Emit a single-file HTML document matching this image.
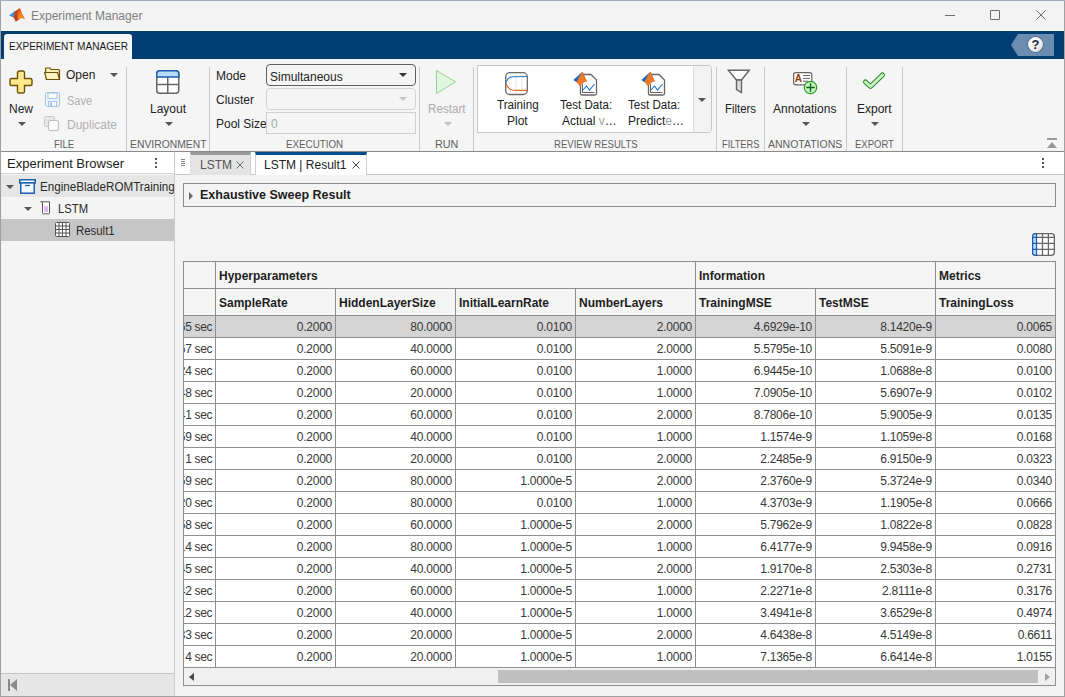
<!DOCTYPE html>
<html><head><meta charset="utf-8">
<style>
*{box-sizing:border-box;margin:0;padding:0}
html,body{width:1065px;height:697px;overflow:hidden;background:#f3f3f3;font-family:"Liberation Sans",sans-serif;color:#1a1a1a;position:relative}
.a{position:absolute}
.t{position:absolute;white-space:nowrap;line-height:1}
.sep{position:absolute;width:1px;background:#c9c9c9;top:67px;height:84px}
.lbl{position:absolute;top:140px;font-size:10px;color:#606060;white-space:nowrap;line-height:1}
.bt{position:absolute;font-size:12px;white-space:nowrap;line-height:1;color:#222}
.arr{position:absolute;width:0;height:0;border-left:4px solid transparent;border-right:4px solid transparent;border-top:4px solid #555}
.th{position:absolute;font-size:12px;font-weight:bold;white-space:nowrap;line-height:1;color:#1e1e1e}
.td{position:absolute;font-size:12px;white-space:nowrap;line-height:1;color:#383838;letter-spacing:-0.25px}
svg{position:absolute;overflow:visible}
</style></head><body>
<!-- title bar -->
<div class="a" style="left:0;top:0;width:1065px;height:31px;background:#f3f3f3"></div>
<svg style="left:9px;top:7px" width="17" height="16" viewBox="0 0 17 16">
<polygon points="0,8.4 6,3.8 7.5,6.5 5.3,10.7" fill="#3f94d8"/>
<polygon points="4.5,10 6,4.5 10.7,0.9 13,6.5 15.8,12.2 12.8,10.5 6.8,14.8" fill="#c33d1c"/>
<polygon points="10.7,0.9 13,6.5 15.8,12.2 12.8,10.5 9,13 8.5,7" fill="#f08a28"/>
<polygon points="10.7,0.9 12,4 10,9 8,6" fill="#e06020"/>
</svg>
<div class="t" style="left:31px;top:10px;font-size:12px;color:#7e7e7e">Experiment Manager</div>
<div class="a" style="left:945px;top:15px;width:10px;height:1px;background:#6e6e6e"></div>
<div class="a" style="left:990px;top:10px;width:10px;height:10px;border:1px solid #6e6e6e;border-radius:1px"></div>
<svg style="left:1036px;top:10px" width="10" height="10" viewBox="0 0 10 10"><path d="M0.5 0.5L9.5 9.5M9.5 0.5L0.5 9.5" stroke="#6e6e6e" stroke-width="1"/></svg>
<!-- blue bar -->
<div class="a" style="left:0;top:30px;width:1065px;height:1px;background:#fafafa"></div>
<div class="a" style="left:1px;top:31px;width:1064px;height:28px;background:#003e73"></div>
<div class="a" style="left:4px;top:34px;width:128px;height:25px;background:#f5f5f5;border-radius:3px 3px 0 0"></div>
<div class="t" style="left:9px;top:41px;font-size:11px;color:#1a1a1a;transform:scaleX(0.915);transform-origin:0 0">EXPERIMENT MANAGER</div>
<svg style="left:1011px;top:34px" width="43" height="22" viewBox="0 0 43 22"><polygon points="0,11 7,0 43,0 43,22 7,22" fill="#6a8db0"/></svg>
<div class="a" style="left:1028px;top:37px;width:15px;height:15px;border-radius:50%;background:radial-gradient(circle at 40% 35%,#ffffff 0,#f4f4f4 45%,#c8c8d0 100%);box-shadow:0 0 0 0.5px #30506a"></div>
<div class="t" style="left:1031.5px;top:38px;font-size:13px;font-weight:bold;color:#1a2540">?</div>
<!-- toolstrip -->
<div class="a" style="left:1px;top:59px;width:1063px;height:92px;background:#f5f5f5"></div>
<div class="a" style="left:0;top:151px;width:1065px;height:1px;background:#8a8a8a"></div>
<div class="sep" style="left:126px"></div>
<div class="sep" style="left:209px"></div>
<div class="sep" style="left:419px"></div>
<div class="sep" style="left:473px"></div>
<div class="sep" style="left:716px"></div>
<div class="sep" style="left:764px"></div>
<div class="sep" style="left:846px"></div>
<div class="sep" style="left:902px"></div>
<div class="lbl" style="left:54px;transform:scaleX(0.95);transform-origin:0 0">FILE</div>
<div class="lbl" style="left:130px;transform:scaleX(1.035);transform-origin:0 0">ENVIRONMENT</div>
<div class="lbl" style="left:286px;transform:scaleX(0.98);transform-origin:0 0">EXECUTION</div>
<div class="lbl" style="left:435px;transform:scaleX(1.08);transform-origin:0 0">RUN</div>
<div class="lbl" style="left:554px;transform:scaleX(0.955);transform-origin:0 0">REVIEW RESULTS</div>
<div class="lbl" style="left:722px;transform:scaleX(0.925);transform-origin:0 0">FILTERS</div>
<div class="lbl" style="left:768px;transform:scaleX(1.05);transform-origin:0 0">ANNOTATIONS</div>
<div class="lbl" style="left:855px;transform:scaleX(0.95);transform-origin:0 0">EXPORT</div>
<!-- collapse icon -->
<div class="a" style="left:1047px;top:138px;width:10px;height:2px;background:#9a9a9a"></div>
<div class="a" style="left:1047px;top:142px;width:0;height:0;border-left:5px solid transparent;border-right:5px solid transparent;border-bottom:6px solid #9a9a9a"></div>
<!-- FILE -->
<svg style="left:9px;top:70px" width="24" height="24" viewBox="0 0 24 24"><path d="M9.5 1.5 Q8.5 1.5 8.5 2.5 V8.5 H2.5 Q1 8.5 1 10 V14 Q1 15.5 2.5 15.5 H8.5 V21.5 Q8.5 23 10 23 H14 Q15.5 23 15.5 21.5 V15.5 H21.5 Q23 15.5 23 14 V10 Q23 8.5 21.5 8.5 H15.5 V2.5 Q15.5 1 14 1 H10 Z" fill="#ffe98c" stroke="#6b5206" stroke-width="1.4"/></svg>
<div class="bt" style="left:9px;top:103px">New</div>
<div class="arr" style="left:18px;top:122px"></div>
<svg style="left:44px;top:67px" width="17" height="14" viewBox="0 0 17 14"><path d="M1.5 2 Q1.5 1 2.5 1 H6 L7 2.5 H14.5 Q15.5 2.5 15.5 3.5 V12.5 H2.5 Z" fill="#fff0b0" stroke="#6b5206" stroke-width="1.2"/><path d="M0.7 5.5 H13.5 L15.5 12.5 H2.5 Z" fill="#fff3c4" stroke="#6b5206" stroke-width="1.2"/></svg>
<div class="bt" style="left:66px;top:69px">Open</div>
<div class="arr" style="left:110px;top:73px"></div>
<svg style="left:45px;top:92px" width="15" height="15" viewBox="0 0 15 15"><path d="M1.5 0.5 H13.5 Q14.5 0.5 14.5 1.5 V13.5 Q14.5 14.5 13.5 14.5 H2 L0.5 13 V1.5 Q0.5 0.5 1.5 0.5 Z" fill="#eef4fb" stroke="#a9c3e3" stroke-width="1"/><rect x="3" y="1" width="9" height="5.5" fill="#fafafa" stroke="#a9c3e3" stroke-width="1"/><rect x="3.5" y="9.5" width="8" height="5" fill="#fafafa" stroke="#a9c3e3" stroke-width="1"/><rect x="5" y="10.5" width="2" height="3.5" fill="#a9c3e3"/></svg>
<div class="bt" style="left:67px;top:95px;color:#b0b0b0;transform:scaleX(0.92);transform-origin:0 0">Save</div>
<svg style="left:44px;top:116px" width="16" height="15" viewBox="0 0 16 15"><rect x="0.5" y="0.5" width="10" height="10" rx="1.5" fill="#e8e8e8" stroke="#cccccc"/><rect x="4.5" y="4.5" width="10" height="10" rx="1.5" fill="#fbfbfb" stroke="#bdbdbd"/></svg>
<div class="bt" style="left:67px;top:119px;color:#b0b0b0">Duplicate</div>
<!-- ENVIRONMENT -->
<svg style="left:156px;top:70px" width="24" height="24" viewBox="0 0 24 24"><rect x="0.75" y="0.75" width="22" height="22.5" rx="3" fill="#fff" stroke="#666" stroke-width="1.5"/><path d="M0.75 7 V3.75 Q0.75 0.75 3.75 0.75 H19.75 Q22.75 0.75 22.75 3.75 V7 Z" fill="#b8dcfc" stroke="#1c5cae" stroke-width="1.5"/><path d="M11.75 7 V23 M0.75 14.5 H22.75" stroke="#666" stroke-width="1.5"/></svg>
<div class="bt" style="left:150px;top:103px">Layout</div>
<div class="arr" style="left:165px;top:122px"></div>
<!-- EXECUTION -->
<div class="bt" style="left:216px;top:70px">Mode</div>
<div class="bt" style="left:216px;top:94px">Cluster</div>
<div class="bt" style="left:216px;top:118px">Pool Size</div>
<div class="a" style="left:266px;top:64px;width:150px;height:22px;border:1px solid #5f5f5f;border-radius:4px;background:#f5f5f5"></div>
<div class="bt" style="left:270px;top:71px">Simultaneous</div>
<div class="arr" style="left:399px;top:73px;border-top-color:#333"></div>
<div class="a" style="left:266px;top:88px;width:150px;height:22px;border:1px solid #d2d2d2;border-radius:4px;background:#f5f5f5"></div>
<div class="arr" style="left:399px;top:97px;border-top-color:#c4c4c4"></div>
<div class="a" style="left:266px;top:112px;width:150px;height:22px;border:1px solid #cfcfcf;background:#f5f5f5"></div>
<div class="bt" style="left:271px;top:118px;color:#a8a8a8">0</div>
<!-- RUN -->
<svg style="left:436px;top:70px" width="20" height="24" viewBox="0 0 20 24"><polygon points="0.5,0.5 19.5,11.8 0.5,23.5" fill="#e3f6e1" stroke="#96d396" stroke-width="1"/></svg>
<div class="bt" style="left:428px;top:103px;color:#ababab;transform:scaleX(0.97);transform-origin:0 0">Restart</div>
<div class="arr" style="left:444px;top:122px;border-top-color:#c0c0c0"></div>
<!-- REVIEW RESULTS gallery -->
<div class="a" style="left:477px;top:65px;width:235px;height:68px;border:1px solid #c6c6c6;border-radius:0 4px 4px 0;background:#fff"></div>
<div class="a" style="left:693px;top:66px;width:18px;height:66px;background:#f3f3f3;border-left:1px solid #e0e0e0;border-radius:0 3px 3px 0"></div>
<div class="arr" style="left:698px;top:98px"></div>
<svg style="left:505px;top:72px" width="23" height="23" viewBox="0 0 23 23"><rect x="0.7" y="0.7" width="21.6" height="21.8" rx="4" fill="#fff"/><path d="M5.5 2 V21 M11 2 V21 M17 2 V21" stroke="#f0f0f0" stroke-width="1.5"/><path d="M0.8 10.5 C2.5 7 4 5 7 4.8 S14 4.5 22 4.5" fill="none" stroke="#2479cf" stroke-width="1.1"/><path d="M0.8 11.5 C2.5 15.5 4 17.5 7 18 S14 18.4 22 18.4" fill="none" stroke="#e2662a" stroke-width="1.1"/><rect x="0.7" y="0.7" width="21.6" height="21.8" rx="4" fill="none" stroke="#6a6a6a" stroke-width="1.3"/></svg>
<div class="bt" style="left:497px;top:99px;transform:scaleX(0.97);transform-origin:0 0">Training</div>
<div class="bt" style="left:507px;top:115px">Plot</div>
<svg style="left:573px;top:71px" width="25" height="25" viewBox="0 0 25 25"><path d="M7.5 3.5 H18 L23.5 9 V22.5 Q23.5 24 22 24 H9 Q7.5 24 7.5 22.5 Z" fill="#fff" stroke="#666" stroke-width="1.3"/><path d="M9.5 13 V21.5 H21.5" fill="none" stroke="#666" stroke-width="1"/><path d="M10 19 L13.5 15 L16.5 19 L21.5 13" fill="none" stroke="#1a73c9" stroke-width="1.1"/><polygon points="0.3,9 7.8,2.2 9.2,3.2 4,11.5" fill="#1f66c1"/><polygon points="3.5,10.8 8,2.6 9.3,1 13.8,10.8 12.2,10.4 6.4,15" fill="#f0782a"/><path d="M8 2.6 L9.3 1 L13.8 10.8" fill="none" stroke="#b0501a" stroke-width="0.6"/></svg>
<div class="bt" style="left:560px;top:99px;transform:scaleX(0.965);transform-origin:0 0">Test Data:</div>
<div class="bt" style="left:562px;top:115px">Actual <span style="color:#a0a0a0">v</span>…</div>
<svg style="left:641px;top:71px" width="25" height="25" viewBox="0 0 25 25"><path d="M7.5 3.5 H18 L23.5 9 V22.5 Q23.5 24 22 24 H9 Q7.5 24 7.5 22.5 Z" fill="#fff" stroke="#666" stroke-width="1.3"/><path d="M9.5 13 V21.5 H21.5" fill="none" stroke="#666" stroke-width="1"/><path d="M10 19 L13.5 15 L16.5 19 L21.5 13" fill="none" stroke="#1a73c9" stroke-width="1.1"/><polygon points="0.3,9 7.8,2.2 9.2,3.2 4,11.5" fill="#1f66c1"/><polygon points="3.5,10.8 8,2.6 9.3,1 13.8,10.8 12.2,10.4 6.4,15" fill="#f0782a"/><path d="M8 2.6 L9.3 1 L13.8 10.8" fill="none" stroke="#b0501a" stroke-width="0.6"/></svg>
<div class="bt" style="left:628px;top:99px;transform:scaleX(0.965);transform-origin:0 0">Test Data:</div>
<div class="bt" style="left:628px;top:115px">Predict<span style="color:#a0a0a0">e</span>…</div>
<!-- FILTERS -->
<svg style="left:727px;top:69px" width="24" height="25" viewBox="0 0 24 25"><path d="M1.3 1.3 H22.3 L14.5 11 H9.5 Z" fill="#fff" stroke="#666" stroke-width="1.4"/><path d="M9.5 11 H14.5 V23.5 L9.5 20.5 Z" fill="#dcdcdc" stroke="#666" stroke-width="1.4"/></svg>
<div class="bt" style="left:725px;top:103px;transform:scaleX(0.95);transform-origin:0 0">Filters</div>
<!-- ANNOTATIONS -->
<svg style="left:793px;top:72px" width="25" height="23" viewBox="0 0 25 23"><rect x="0.6" y="0.6" width="18.2" height="12.2" rx="2.2" fill="#fff" stroke="#666" stroke-width="1.2"/><text x="1.8" y="10" font-family="Liberation Sans" font-weight="bold" font-size="10" fill="#8f3c05">A</text><path d="M10 3.5 H17 M10 6.4 H17 M10 9.2 H15" stroke="#666" stroke-width="1"/><circle cx="17.5" cy="15.5" r="6.2" fill="#c6f5c2" stroke="#2a9a2a" stroke-width="1.2"/><path d="M17.5 11.3 V19.7 M13.3 15.5 H21.7" stroke="#106010" stroke-width="1.4"/></svg>
<div class="bt" style="left:773px;top:103px">Annotations</div>
<div class="arr" style="left:802px;top:122px"></div>
<!-- EXPORT -->
<svg style="left:862px;top:72px" width="24" height="19" viewBox="0 0 24 19"><path d="M3.5 10 L8.5 14.5 L20.5 3" fill="none" stroke="#2a8a2a" stroke-width="5" stroke-linecap="round" stroke-linejoin="round"/><path d="M3.5 10 L8.5 14.5 L20.5 3" fill="none" stroke="#c8f7c4" stroke-width="3" stroke-linecap="round" stroke-linejoin="round"/></svg>
<div class="bt" style="left:857px;top:103px">Export</div>
<div class="arr" style="left:871px;top:122px"></div>
<!-- left panel -->
<div class="a" style="left:1px;top:152px;width:173px;height:544px;background:#f4f4f4"></div>
<div class="a" style="left:1px;top:152px;width:173px;height:22px;background:#fff;border-bottom:1px solid #d0d0d0"></div>
<div class="t" style="left:7px;top:157px;font-size:13px;color:#1a1a1a">Experiment Browser</div>
<div class="a" style="left:155px;top:158px;width:2px;height:2px;background:#5a5a5a"></div>
<div class="a" style="left:155px;top:162px;width:2px;height:2px;background:#5a5a5a"></div>
<div class="a" style="left:155px;top:166px;width:2px;height:2px;background:#5a5a5a"></div>
<div class="a" style="left:1px;top:175px;width:173px;height:22px;background:#e6e6e6"></div>
<div class="arr" style="left:6px;top:185px;border-top-color:#555"></div>
<svg style="left:19px;top:179px" width="17" height="15" viewBox="0 0 17 15"><rect x="0.75" y="0.75" width="15.5" height="3.2" fill="#fff" stroke="#1c5fae" stroke-width="1.5"/><rect x="1.75" y="3.9" width="13.5" height="10.3" fill="#f3f8ff" stroke="#1c5fae" stroke-width="1.5"/><path d="M6 6.5 H11" stroke="#1c5fae" stroke-width="1.2"/></svg>
<div class="a" style="left:40px;top:175px;width:134px;height:22px;overflow:hidden"><div class="t" style="left:0;top:6px;font-size:12px;color:#2a2a2a;transform:scaleX(0.97);transform-origin:0 0">EngineBladeROMTraining</div></div>
<div class="arr" style="left:24px;top:207px;border-top-color:#555"></div>
<svg style="left:40px;top:201px" width="11" height="14" viewBox="0 0 11 14"><path d="M0.5 0.8 H9.5 M1.5 0.8 Q2.5 1 2.5 2 V11.8 Q2.5 12.8 3.5 12.8 H8.5 Q9.5 12.8 9.5 11.8 V0.8" fill="#fff" stroke="#555" stroke-width="1"/><rect x="4.3" y="5.2" width="3.6" height="5.8" fill="#dcb4f2"/></svg>
<div class="t" style="left:58px;top:203px;font-size:12px;color:#2a2a2a;transform:scaleX(0.94);transform-origin:0 0">LSTM</div>
<div class="a" style="left:1px;top:219px;width:173px;height:22px;background:#c6c6c6"></div>
<svg style="left:55px;top:222px" width="15" height="15" viewBox="0 0 15 15"><rect x="0.5" y="0.5" width="14" height="14" rx="1" fill="#fff" stroke="#555" stroke-width="1"/><path d="M4 0.5 V14.5 M7.5 0.5 V14.5 M11 0.5 V14.5 M0.5 4 H14.5 M0.5 7.5 H14.5 M0.5 11 H14.5" stroke="#555" stroke-width="1"/></svg>
<div class="t" style="left:76px;top:225px;font-size:12px;color:#2a2a2a;transform:scaleX(0.95);transform-origin:0 0">Result1</div>
<div class="a" style="left:1px;top:673px;width:173px;height:23px;background:#e6e6e6;border-top:1px solid #c4c4c4"></div>
<div class="a" style="left:8px;top:679px;width:2px;height:12px;background:#8a8a8a"></div>
<div class="a" style="left:10px;top:679px;width:0;height:0;border-top:6px solid transparent;border-bottom:6px solid transparent;border-right:7px solid #8a8a8a"></div>
<div class="a" style="left:174px;top:152px;width:1px;height:544px;background:#cdcdcd"></div>
<!-- document tabs -->
<div class="a" style="left:175px;top:152px;width:889px;height:23px;background:#fff;border-bottom:1px solid #c8c8c8"></div>
<div class="a" style="left:181px;top:159px;width:4px;height:1px;background:#888"></div>
<div class="a" style="left:181px;top:161px;width:4px;height:1px;background:#888"></div>
<div class="a" style="left:181px;top:163px;width:4px;height:1px;background:#888"></div>
<div class="a" style="left:181px;top:165px;width:4px;height:1px;background:#888"></div>
<div class="a" style="left:190px;top:152px;width:61px;height:23px;background:#e4e4e4;border-top:3px solid #9a9a9a;border-right:1px solid #d0d0d0;border-left:1px solid #e0e0e0"></div>
<div class="t" style="left:200px;top:159px;font-size:12px;color:#555">LSTM</div>
<svg style="left:236px;top:161px" width="8" height="8" viewBox="0 0 8 8"><path d="M0.5 0.5L7.5 7.5M7.5 0.5L0.5 7.5" stroke="#666" stroke-width="1"/></svg>
<div class="a" style="left:255px;top:152px;width:112px;height:23px;background:#fff;border-top:3px solid #004b8d;border-left:1px solid #cfcfcf;border-right:1px solid #cfcfcf"></div>
<div class="t" style="left:264px;top:159px;font-size:12px;color:#222">LSTM | Result1</div>
<svg style="left:352px;top:161px" width="8" height="8" viewBox="0 0 8 8"><path d="M0.5 0.5L7.5 7.5M7.5 0.5L0.5 7.5" stroke="#444" stroke-width="1"/></svg>
<div class="a" style="left:1042px;top:158px;width:2px;height:2px;background:#555"></div>
<div class="a" style="left:1042px;top:162px;width:2px;height:2px;background:#555"></div>
<div class="a" style="left:1042px;top:166px;width:2px;height:2px;background:#555"></div>
<!-- exhaustive panel -->
<div class="a" style="left:183px;top:183px;width:873px;height:24px;border:1px solid #8c8c8c;background:#f4f4f4"></div>
<div class="a" style="left:189px;top:192px;width:0;height:0;border-top:4px solid transparent;border-bottom:4px solid transparent;border-left:4.5px solid #6a6a6a"></div>
<div class="th" style="left:200px;top:189px;font-size:12.5px">Exhaustive Sweep Result</div>
<!-- grid icon -->
<svg style="left:1032px;top:233px" width="23" height="23" viewBox="0 0 23 23"><rect x="0.65" y="0.65" width="21.7" height="21.7" rx="3" fill="#fff" stroke="#666" stroke-width="1.3"/><path d="M10.5 0.6 V22.4 M16.4 0.6 V22.4 M4.5 4.4 H22.4 M4.5 10.4 H22.4 M4.5 16.4 H22.4" stroke="#666" stroke-width="1.3"/><path d="M4.5 0.65 H3.65 Q0.65 0.65 0.65 3.65 V19.35 Q0.65 22.35 3.65 22.35 H4.5 Z" fill="#bfe0fb" stroke="#1a5fb8" stroke-width="1.3"/><path d="M0.65 4.4 H4.5 M0.65 10.4 H4.5 M0.65 16.4 H4.5" stroke="#1a5fb8" stroke-width="1.3"/></svg>
<!-- right border & window border -->
<div class="a" style="left:0;top:0;width:1px;height:697px;background:#a0a0a0"></div>
<div class="a" style="left:1064px;top:0;width:1px;height:697px;background:#a0a0a0"></div>
<div class="a" style="left:0;top:696px;width:1065px;height:1px;background:#a0a0a0"></div>
<div class="a" style="left:0;top:0;width:1065px;height:1px;background:#a4b0bd"></div>
<div class="a" style="left:183px;top:261px;width:873px;height:425px;background:#fff"></div>
<div class="a" style="left:183px;top:261px;width:873px;height:54px;background:#f5f5f5"></div>
<div class="a" style="left:183px;top:315px;width:873px;height:22px;background:#d5d5d5"></div>
<div class="a" style="left:183px;top:667px;width:873px;height:19px;background:#f0f0f0"></div>
<div class="a" style="left:498px;top:670px;width:540px;height:13px;background:#c0c0c0"></div>
<div class="a" style="left:189px;top:673px;width:0;height:0;border-top:4px solid transparent;border-bottom:4px solid transparent;border-right:5px solid #444"></div>
<div class="a" style="left:1045px;top:673px;width:0;height:0;border-top:4px solid transparent;border-bottom:4px solid transparent;border-left:5px solid #a0a0a0"></div>
<div class="a" style="left:183px;top:261px;width:873px;height:1px;background:#8f8f8f"></div>
<div class="a" style="left:183px;top:288px;width:873px;height:1px;background:#8f8f8f"></div>
<div class="a" style="left:183px;top:315px;width:873px;height:1px;background:#8f8f8f"></div>
<div class="a" style="left:183px;top:337px;width:873px;height:1px;background:#8f8f8f"></div>
<div class="a" style="left:183px;top:359px;width:873px;height:1px;background:#8f8f8f"></div>
<div class="a" style="left:183px;top:381px;width:873px;height:1px;background:#8f8f8f"></div>
<div class="a" style="left:183px;top:403px;width:873px;height:1px;background:#8f8f8f"></div>
<div class="a" style="left:183px;top:425px;width:873px;height:1px;background:#8f8f8f"></div>
<div class="a" style="left:183px;top:447px;width:873px;height:1px;background:#8f8f8f"></div>
<div class="a" style="left:183px;top:469px;width:873px;height:1px;background:#8f8f8f"></div>
<div class="a" style="left:183px;top:491px;width:873px;height:1px;background:#8f8f8f"></div>
<div class="a" style="left:183px;top:513px;width:873px;height:1px;background:#8f8f8f"></div>
<div class="a" style="left:183px;top:535px;width:873px;height:1px;background:#8f8f8f"></div>
<div class="a" style="left:183px;top:557px;width:873px;height:1px;background:#8f8f8f"></div>
<div class="a" style="left:183px;top:579px;width:873px;height:1px;background:#8f8f8f"></div>
<div class="a" style="left:183px;top:601px;width:873px;height:1px;background:#8f8f8f"></div>
<div class="a" style="left:183px;top:623px;width:873px;height:1px;background:#8f8f8f"></div>
<div class="a" style="left:183px;top:645px;width:873px;height:1px;background:#8f8f8f"></div>
<div class="a" style="left:183px;top:667px;width:873px;height:1px;background:#8f8f8f"></div>
<div class="a" style="left:183px;top:685px;width:873px;height:1px;background:#8f8f8f"></div>
<div class="a" style="left:183px;top:261px;width:1px;height:425px;background:#8f8f8f"></div>
<div class="a" style="left:215px;top:261px;width:1px;height:406px;background:#8f8f8f"></div>
<div class="a" style="left:335px;top:288px;width:1px;height:379px;background:#8f8f8f"></div>
<div class="a" style="left:455px;top:288px;width:1px;height:379px;background:#8f8f8f"></div>
<div class="a" style="left:575px;top:288px;width:1px;height:379px;background:#8f8f8f"></div>
<div class="a" style="left:695px;top:261px;width:1px;height:406px;background:#8f8f8f"></div>
<div class="a" style="left:815px;top:288px;width:1px;height:379px;background:#8f8f8f"></div>
<div class="a" style="left:935px;top:261px;width:1px;height:406px;background:#8f8f8f"></div>
<div class="a" style="left:1055px;top:261px;width:1px;height:425px;background:#8f8f8f"></div>
<div class="th" style="left:219px;top:270px">Hyperparameters</div>
<div class="th" style="left:699px;top:270px">Information</div>
<div class="th" style="left:939px;top:270px">Metrics</div>
<div class="th" style="left:219px;top:297px">SampleRate</div>
<div class="th" style="left:339px;top:297px">HiddenLayerSize</div>
<div class="th" style="left:459px;top:297px">InitialLearnRate</div>
<div class="th" style="left:579px;top:297px">NumberLayers</div>
<div class="th" style="left:699px;top:297px">TrainingMSE</div>
<div class="th" style="left:819px;top:297px">TestMSE</div>
<div class="th" style="left:939px;top:297px">TrainingLoss</div>
<div class="a" style="left:184px;top:316px;width:31px;height:21px;overflow:hidden"><div class="td" style="right:23px;top:5px;letter-spacing:0">65</div><div class="td" style="left:10.5px;top:5px;letter-spacing:-0.3px">sec</div></div>
<div class="td" style="left:215px;width:117px;top:321px;text-align:right">0.2000</div>
<div class="td" style="left:335px;width:117px;top:321px;text-align:right">80.0000</div>
<div class="td" style="left:455px;width:117px;top:321px;text-align:right">0.0100</div>
<div class="td" style="left:575px;width:117px;top:321px;text-align:right">2.0000</div>
<div class="td" style="left:695px;width:117px;top:321px;text-align:right">4.6929e-10</div>
<div class="td" style="left:815px;width:117px;top:321px;text-align:right">8.1420e-9</div>
<div class="td" style="left:935px;width:117px;top:321px;text-align:right">0.0065</div>
<div class="a" style="left:184px;top:338px;width:31px;height:21px;overflow:hidden"><div class="td" style="right:23px;top:5px;letter-spacing:0">67</div><div class="td" style="left:10.5px;top:5px;letter-spacing:-0.3px">sec</div></div>
<div class="td" style="left:215px;width:117px;top:343px;text-align:right">0.2000</div>
<div class="td" style="left:335px;width:117px;top:343px;text-align:right">40.0000</div>
<div class="td" style="left:455px;width:117px;top:343px;text-align:right">0.0100</div>
<div class="td" style="left:575px;width:117px;top:343px;text-align:right">2.0000</div>
<div class="td" style="left:695px;width:117px;top:343px;text-align:right">5.5795e-10</div>
<div class="td" style="left:815px;width:117px;top:343px;text-align:right">5.5091e-9</div>
<div class="td" style="left:935px;width:117px;top:343px;text-align:right">0.0080</div>
<div class="a" style="left:184px;top:360px;width:31px;height:21px;overflow:hidden"><div class="td" style="right:23px;top:5px;letter-spacing:0">24</div><div class="td" style="left:10.5px;top:5px;letter-spacing:-0.3px">sec</div></div>
<div class="td" style="left:215px;width:117px;top:365px;text-align:right">0.2000</div>
<div class="td" style="left:335px;width:117px;top:365px;text-align:right">60.0000</div>
<div class="td" style="left:455px;width:117px;top:365px;text-align:right">0.0100</div>
<div class="td" style="left:575px;width:117px;top:365px;text-align:right">1.0000</div>
<div class="td" style="left:695px;width:117px;top:365px;text-align:right">6.9445e-10</div>
<div class="td" style="left:815px;width:117px;top:365px;text-align:right">1.0688e-8</div>
<div class="td" style="left:935px;width:117px;top:365px;text-align:right">0.0100</div>
<div class="a" style="left:184px;top:382px;width:31px;height:21px;overflow:hidden"><div class="td" style="right:23px;top:5px;letter-spacing:0">48</div><div class="td" style="left:10.5px;top:5px;letter-spacing:-0.3px">sec</div></div>
<div class="td" style="left:215px;width:117px;top:387px;text-align:right">0.2000</div>
<div class="td" style="left:335px;width:117px;top:387px;text-align:right">20.0000</div>
<div class="td" style="left:455px;width:117px;top:387px;text-align:right">0.0100</div>
<div class="td" style="left:575px;width:117px;top:387px;text-align:right">1.0000</div>
<div class="td" style="left:695px;width:117px;top:387px;text-align:right">7.0905e-10</div>
<div class="td" style="left:815px;width:117px;top:387px;text-align:right">5.6907e-9</div>
<div class="td" style="left:935px;width:117px;top:387px;text-align:right">0.0102</div>
<div class="a" style="left:184px;top:404px;width:31px;height:21px;overflow:hidden"><div class="td" style="right:23px;top:5px;letter-spacing:0">41</div><div class="td" style="left:10.5px;top:5px;letter-spacing:-0.3px">sec</div></div>
<div class="td" style="left:215px;width:117px;top:409px;text-align:right">0.2000</div>
<div class="td" style="left:335px;width:117px;top:409px;text-align:right">60.0000</div>
<div class="td" style="left:455px;width:117px;top:409px;text-align:right">0.0100</div>
<div class="td" style="left:575px;width:117px;top:409px;text-align:right">2.0000</div>
<div class="td" style="left:695px;width:117px;top:409px;text-align:right">8.7806e-10</div>
<div class="td" style="left:815px;width:117px;top:409px;text-align:right">5.9005e-9</div>
<div class="td" style="left:935px;width:117px;top:409px;text-align:right">0.0135</div>
<div class="a" style="left:184px;top:426px;width:31px;height:21px;overflow:hidden"><div class="td" style="right:23px;top:5px;letter-spacing:0">59</div><div class="td" style="left:10.5px;top:5px;letter-spacing:-0.3px">sec</div></div>
<div class="td" style="left:215px;width:117px;top:431px;text-align:right">0.2000</div>
<div class="td" style="left:335px;width:117px;top:431px;text-align:right">40.0000</div>
<div class="td" style="left:455px;width:117px;top:431px;text-align:right">0.0100</div>
<div class="td" style="left:575px;width:117px;top:431px;text-align:right">1.0000</div>
<div class="td" style="left:695px;width:117px;top:431px;text-align:right">1.1574e-9</div>
<div class="td" style="left:815px;width:117px;top:431px;text-align:right">1.1059e-8</div>
<div class="td" style="left:935px;width:117px;top:431px;text-align:right">0.0168</div>
<div class="a" style="left:184px;top:448px;width:31px;height:21px;overflow:hidden"><div class="td" style="right:23px;top:5px;letter-spacing:0">1</div><div class="td" style="left:10.5px;top:5px;letter-spacing:-0.3px">sec</div></div>
<div class="td" style="left:215px;width:117px;top:453px;text-align:right">0.2000</div>
<div class="td" style="left:335px;width:117px;top:453px;text-align:right">20.0000</div>
<div class="td" style="left:455px;width:117px;top:453px;text-align:right">0.0100</div>
<div class="td" style="left:575px;width:117px;top:453px;text-align:right">2.0000</div>
<div class="td" style="left:695px;width:117px;top:453px;text-align:right">2.2485e-9</div>
<div class="td" style="left:815px;width:117px;top:453px;text-align:right">6.9150e-9</div>
<div class="td" style="left:935px;width:117px;top:453px;text-align:right">0.0323</div>
<div class="a" style="left:184px;top:470px;width:31px;height:21px;overflow:hidden"><div class="td" style="right:23px;top:5px;letter-spacing:0">59</div><div class="td" style="left:10.5px;top:5px;letter-spacing:-0.3px">sec</div></div>
<div class="td" style="left:215px;width:117px;top:475px;text-align:right">0.2000</div>
<div class="td" style="left:335px;width:117px;top:475px;text-align:right">80.0000</div>
<div class="td" style="left:455px;width:117px;top:475px;text-align:right">1.0000e-5</div>
<div class="td" style="left:575px;width:117px;top:475px;text-align:right">2.0000</div>
<div class="td" style="left:695px;width:117px;top:475px;text-align:right">2.3760e-9</div>
<div class="td" style="left:815px;width:117px;top:475px;text-align:right">5.3724e-9</div>
<div class="td" style="left:935px;width:117px;top:475px;text-align:right">0.0340</div>
<div class="a" style="left:184px;top:492px;width:31px;height:21px;overflow:hidden"><div class="td" style="right:23px;top:5px;letter-spacing:0">20</div><div class="td" style="left:10.5px;top:5px;letter-spacing:-0.3px">sec</div></div>
<div class="td" style="left:215px;width:117px;top:497px;text-align:right">0.2000</div>
<div class="td" style="left:335px;width:117px;top:497px;text-align:right">80.0000</div>
<div class="td" style="left:455px;width:117px;top:497px;text-align:right">0.0100</div>
<div class="td" style="left:575px;width:117px;top:497px;text-align:right">1.0000</div>
<div class="td" style="left:695px;width:117px;top:497px;text-align:right">4.3703e-9</div>
<div class="td" style="left:815px;width:117px;top:497px;text-align:right">1.1905e-8</div>
<div class="td" style="left:935px;width:117px;top:497px;text-align:right">0.0666</div>
<div class="a" style="left:184px;top:514px;width:31px;height:21px;overflow:hidden"><div class="td" style="right:23px;top:5px;letter-spacing:0">58</div><div class="td" style="left:10.5px;top:5px;letter-spacing:-0.3px">sec</div></div>
<div class="td" style="left:215px;width:117px;top:519px;text-align:right">0.2000</div>
<div class="td" style="left:335px;width:117px;top:519px;text-align:right">60.0000</div>
<div class="td" style="left:455px;width:117px;top:519px;text-align:right">1.0000e-5</div>
<div class="td" style="left:575px;width:117px;top:519px;text-align:right">2.0000</div>
<div class="td" style="left:695px;width:117px;top:519px;text-align:right">5.7962e-9</div>
<div class="td" style="left:815px;width:117px;top:519px;text-align:right">1.0822e-8</div>
<div class="td" style="left:935px;width:117px;top:519px;text-align:right">0.0828</div>
<div class="a" style="left:184px;top:536px;width:31px;height:21px;overflow:hidden"><div class="td" style="right:23px;top:5px;letter-spacing:0">14</div><div class="td" style="left:10.5px;top:5px;letter-spacing:-0.3px">sec</div></div>
<div class="td" style="left:215px;width:117px;top:541px;text-align:right">0.2000</div>
<div class="td" style="left:335px;width:117px;top:541px;text-align:right">80.0000</div>
<div class="td" style="left:455px;width:117px;top:541px;text-align:right">1.0000e-5</div>
<div class="td" style="left:575px;width:117px;top:541px;text-align:right">1.0000</div>
<div class="td" style="left:695px;width:117px;top:541px;text-align:right">6.4177e-9</div>
<div class="td" style="left:815px;width:117px;top:541px;text-align:right">9.9458e-9</div>
<div class="td" style="left:935px;width:117px;top:541px;text-align:right">0.0916</div>
<div class="a" style="left:184px;top:558px;width:31px;height:21px;overflow:hidden"><div class="td" style="right:23px;top:5px;letter-spacing:0">45</div><div class="td" style="left:10.5px;top:5px;letter-spacing:-0.3px">sec</div></div>
<div class="td" style="left:215px;width:117px;top:563px;text-align:right">0.2000</div>
<div class="td" style="left:335px;width:117px;top:563px;text-align:right">40.0000</div>
<div class="td" style="left:455px;width:117px;top:563px;text-align:right">1.0000e-5</div>
<div class="td" style="left:575px;width:117px;top:563px;text-align:right">2.0000</div>
<div class="td" style="left:695px;width:117px;top:563px;text-align:right">1.9170e-8</div>
<div class="td" style="left:815px;width:117px;top:563px;text-align:right">2.5303e-8</div>
<div class="td" style="left:935px;width:117px;top:563px;text-align:right">0.2731</div>
<div class="a" style="left:184px;top:580px;width:31px;height:21px;overflow:hidden"><div class="td" style="right:23px;top:5px;letter-spacing:0">42</div><div class="td" style="left:10.5px;top:5px;letter-spacing:-0.3px">sec</div></div>
<div class="td" style="left:215px;width:117px;top:585px;text-align:right">0.2000</div>
<div class="td" style="left:335px;width:117px;top:585px;text-align:right">60.0000</div>
<div class="td" style="left:455px;width:117px;top:585px;text-align:right">1.0000e-5</div>
<div class="td" style="left:575px;width:117px;top:585px;text-align:right">1.0000</div>
<div class="td" style="left:695px;width:117px;top:585px;text-align:right">2.2271e-8</div>
<div class="td" style="left:815px;width:117px;top:585px;text-align:right">2.8111e-8</div>
<div class="td" style="left:935px;width:117px;top:585px;text-align:right">0.3176</div>
<div class="a" style="left:184px;top:602px;width:31px;height:21px;overflow:hidden"><div class="td" style="right:23px;top:5px;letter-spacing:0">12</div><div class="td" style="left:10.5px;top:5px;letter-spacing:-0.3px">sec</div></div>
<div class="td" style="left:215px;width:117px;top:607px;text-align:right">0.2000</div>
<div class="td" style="left:335px;width:117px;top:607px;text-align:right">40.0000</div>
<div class="td" style="left:455px;width:117px;top:607px;text-align:right">1.0000e-5</div>
<div class="td" style="left:575px;width:117px;top:607px;text-align:right">1.0000</div>
<div class="td" style="left:695px;width:117px;top:607px;text-align:right">3.4941e-8</div>
<div class="td" style="left:815px;width:117px;top:607px;text-align:right">3.6529e-8</div>
<div class="td" style="left:935px;width:117px;top:607px;text-align:right">0.4974</div>
<div class="a" style="left:184px;top:624px;width:31px;height:21px;overflow:hidden"><div class="td" style="right:23px;top:5px;letter-spacing:0">33</div><div class="td" style="left:10.5px;top:5px;letter-spacing:-0.3px">sec</div></div>
<div class="td" style="left:215px;width:117px;top:629px;text-align:right">0.2000</div>
<div class="td" style="left:335px;width:117px;top:629px;text-align:right">20.0000</div>
<div class="td" style="left:455px;width:117px;top:629px;text-align:right">1.0000e-5</div>
<div class="td" style="left:575px;width:117px;top:629px;text-align:right">2.0000</div>
<div class="td" style="left:695px;width:117px;top:629px;text-align:right">4.6438e-8</div>
<div class="td" style="left:815px;width:117px;top:629px;text-align:right">4.5149e-8</div>
<div class="td" style="left:935px;width:117px;top:629px;text-align:right">0.6611</div>
<div class="a" style="left:184px;top:646px;width:31px;height:21px;overflow:hidden"><div class="td" style="right:23px;top:5px;letter-spacing:0">4</div><div class="td" style="left:10.5px;top:5px;letter-spacing:-0.3px">sec</div></div>
<div class="td" style="left:215px;width:117px;top:651px;text-align:right">0.2000</div>
<div class="td" style="left:335px;width:117px;top:651px;text-align:right">20.0000</div>
<div class="td" style="left:455px;width:117px;top:651px;text-align:right">1.0000e-5</div>
<div class="td" style="left:575px;width:117px;top:651px;text-align:right">1.0000</div>
<div class="td" style="left:695px;width:117px;top:651px;text-align:right">7.1365e-8</div>
<div class="td" style="left:815px;width:117px;top:651px;text-align:right">6.6414e-8</div>
<div class="td" style="left:935px;width:117px;top:651px;text-align:right">1.0155</div>
</body></html>
